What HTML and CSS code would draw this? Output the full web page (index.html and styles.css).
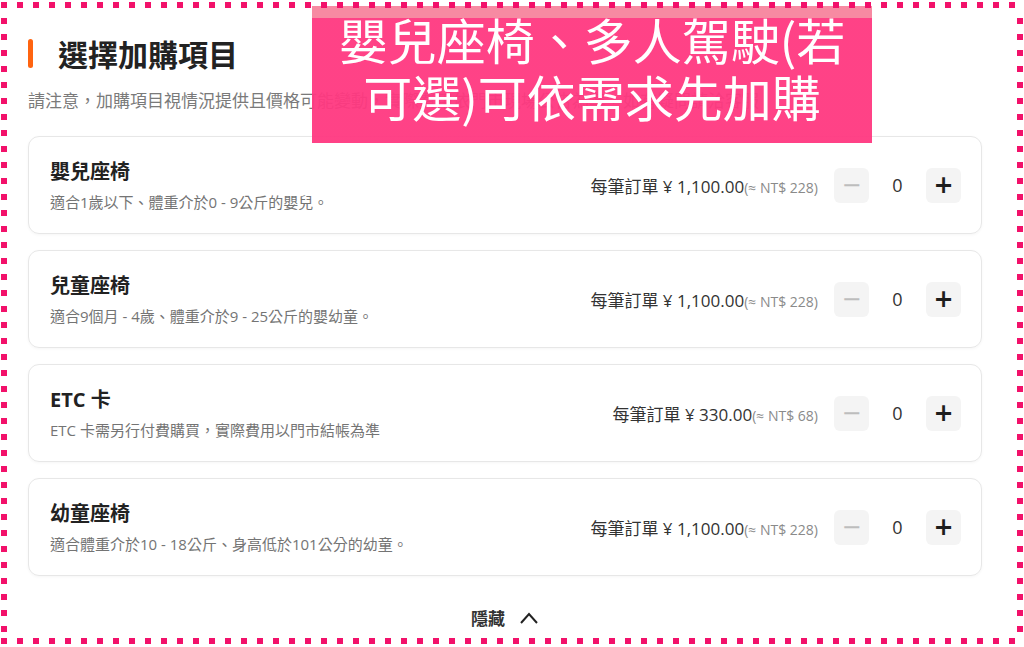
FILE: index.html
```html
<!DOCTYPE html>
<html lang="zh-Hant">
<head>
  <meta charset="UTF-8" />
  <meta name="viewport" content="width=device-width, initial-scale=1.0" />
  <title>選擇加購項目</title>
  <link rel="stylesheet" href="styles.css">
</head>
<body>
  <div class="page">
    <div class="section-head">
      <span class="accent"></span>
      <h2>選擇加購項目</h2>
    </div>
    <p class="notice">請注意，加購項目視情況提供且價格可能變動，實際費用依門市現場公告為準，如有疑問請洽客服</p>

    <div class="addon-list">
      <div class="addon">
        <div class="addon-info">
          <div class="addon-name">嬰兒座椅</div>
          <div class="addon-desc">適合1歲以下、體重介於0 - 9公斤的嬰兒。</div>
        </div>
        <div class="addon-price">每筆訂單 ¥ 1,100.00<span class="twd">(≈ NT$ 228)</span></div>
        <div class="stepper">
          <button class="step minus">&minus;</button>
          <span class="count">0</span>
          <button class="step plus">+</button>
        </div>
      </div>

      <div class="addon">
        <div class="addon-info">
          <div class="addon-name">兒童座椅</div>
          <div class="addon-desc">適合9個月 - 4歲、體重介於9 - 25公斤的嬰幼童。</div>
        </div>
        <div class="addon-price">每筆訂單 ¥ 1,100.00<span class="twd">(≈ NT$ 228)</span></div>
        <div class="stepper">
          <button class="step minus">&minus;</button>
          <span class="count">0</span>
          <button class="step plus">+</button>
        </div>
      </div>

      <div class="addon">
        <div class="addon-info">
          <div class="addon-name">ETC 卡</div>
          <div class="addon-desc">ETC 卡需另行付費購買，實際費用以門市結帳為準</div>
        </div>
        <div class="addon-price">每筆訂單 ¥ 330.00<span class="twd">(≈ NT$ 68)</span></div>
        <div class="stepper">
          <button class="step minus">&minus;</button>
          <span class="count">0</span>
          <button class="step plus">+</button>
        </div>
      </div>

      <div class="addon">
        <div class="addon-info">
          <div class="addon-name">幼童座椅</div>
          <div class="addon-desc">適合體重介於10 - 18公斤、身高低於101公分的幼童。</div>
        </div>
        <div class="addon-price">每筆訂單 ¥ 1,100.00<span class="twd">(≈ NT$ 228)</span></div>
        <div class="stepper">
          <button class="step minus">&minus;</button>
          <span class="count">0</span>
          <button class="step plus">+</button>
        </div>
      </div>
    </div>

    <button class="collapse">隱藏
      <svg width="20" height="14" viewBox="0 0 20 14"><path d="M2 12 L10 3 L18 12" fill="none" stroke="#222" stroke-width="2"/></svg>
    </button>
  </div>

  <!-- caption overlay -->
  <div class="banner">嬰兒座椅、多人駕駛(若<br>可選)可依需求先加購</div>
  <div class="frame"></div>
</body>
</html>
```

FILE: styles.css
```css
html, body {
  margin: 0;
  background: #fff;
}

body {
  font-family: "Open Sans", "Noto Sans CJK TC", sans-serif;
  color: #222;
  width: 1024px;
  height: 647px;
  overflow: hidden;
  position: relative;
}

.page {
  width: 954px;
  padding: 38px 0 0 28px;
}

.section-head {
  display: flex;
  align-items: center;
  gap: 25px;
  height: 30px;
}

.accent {
  width: 5px;
  height: 29px;
  border-radius: 3px;
  background: #ff6410;
}

.section-head h2 {
  margin: 0;
  font-family: "Noto Sans CJK TC", sans-serif;
  font-size: 30px;
  line-height: 30px;
  font-weight: 700;
  color: #222;
}

.notice {
  margin: 20px 0 24px;
  font-family: "Noto Sans CJK TC", sans-serif;
  font-size: 17px;
  line-height: 24px;
  color: #7a7a7a;
  white-space: nowrap;
}

.addon-list {
  display: flex;
  flex-direction: column;
  gap: 16px;
}

.addon {
  box-sizing: border-box;
  height: 98px;
  display: flex;
  align-items: center;
  padding: 0 20px 0 21px;
  border: 1px solid #e7e7e7;
  border-radius: 11px;
  box-shadow: 0 1px 3px rgba(0, 0, 0, 0.04);
}

.addon-info {
  flex: 1;
  display: flex;
  flex-direction: column;
  gap: 7px;
}

.addon-name {
  font-size: 20px;
  line-height: 26px;
  font-weight: 700;
  color: #222;
}

.addon-desc {
  font-size: 15px;
  line-height: 20px;
  color: #747474;
}

.addon-price {
  font-size: 17px;
  color: #333;
  margin-right: 16px;
}

.twd {
  font-size: 14px;
  color: #8a8a8a;
}

.stepper {
  display: flex;
  align-items: center;
}

.step {
  width: 35px;
  height: 35px;
  border: none;
  border-radius: 6px;
  background: #f4f4f4;
  font-family: "DejaVu Sans", sans-serif;
  font-size: 24px;
  line-height: 35px;
  padding: 0;
  cursor: pointer;
}

.minus {
  color: #bdbdbd;
}

.plus {
  color: #1e1e1e;
  font-weight: 700;
}

.count {
  width: 57px;
  text-align: center;
  font-size: 18px;
  color: #333;
}

.collapse {
  display: flex;
  align-items: center;
  gap: 14px;
  margin: 30px auto 0;
  padding: 0;
  border: none;
  background: none;
  font-family: "Noto Sans CJK TC", sans-serif;
  font-size: 17px;
  line-height: 24px;
  font-weight: 700;
  color: #333;
}

.banner {
  position: absolute;
  left: 312px;
  top: 6px;
  width: 560px;
  height: 137px;
  box-sizing: border-box;
  padding-top: 4px;
  background: linear-gradient(#f78aa2 0 12px, rgba(255, 56, 128, 0.95) 12px);
  color: #fff;
  font-family: "Noto Sans CJK TC", sans-serif;
  text-align: center;
  font-size: 49px;
  line-height: 57px;
  font-weight: 400;
}

.frame {
  position: absolute;
  top: 2px;
  left: 1px;
  right: 1px;
  bottom: 3px;
  pointer-events: none;
  background:
    repeating-linear-gradient(90deg, #f2116a 0 6px, transparent 6px 16px) 0 0 / 100% 6px no-repeat,
    repeating-linear-gradient(90deg, #f2116a 0 6px, transparent 6px 16px) 0 100% / 100% 6px no-repeat,
    repeating-linear-gradient(180deg, #f2116a 0 6px, transparent 6px 16px) 0 16px / 6px calc(100% - 22px) no-repeat,
    repeating-linear-gradient(180deg, #f2116a 0 6px, transparent 6px 16px) 100% 16px / 6px calc(100% - 22px) no-repeat;
}
```
